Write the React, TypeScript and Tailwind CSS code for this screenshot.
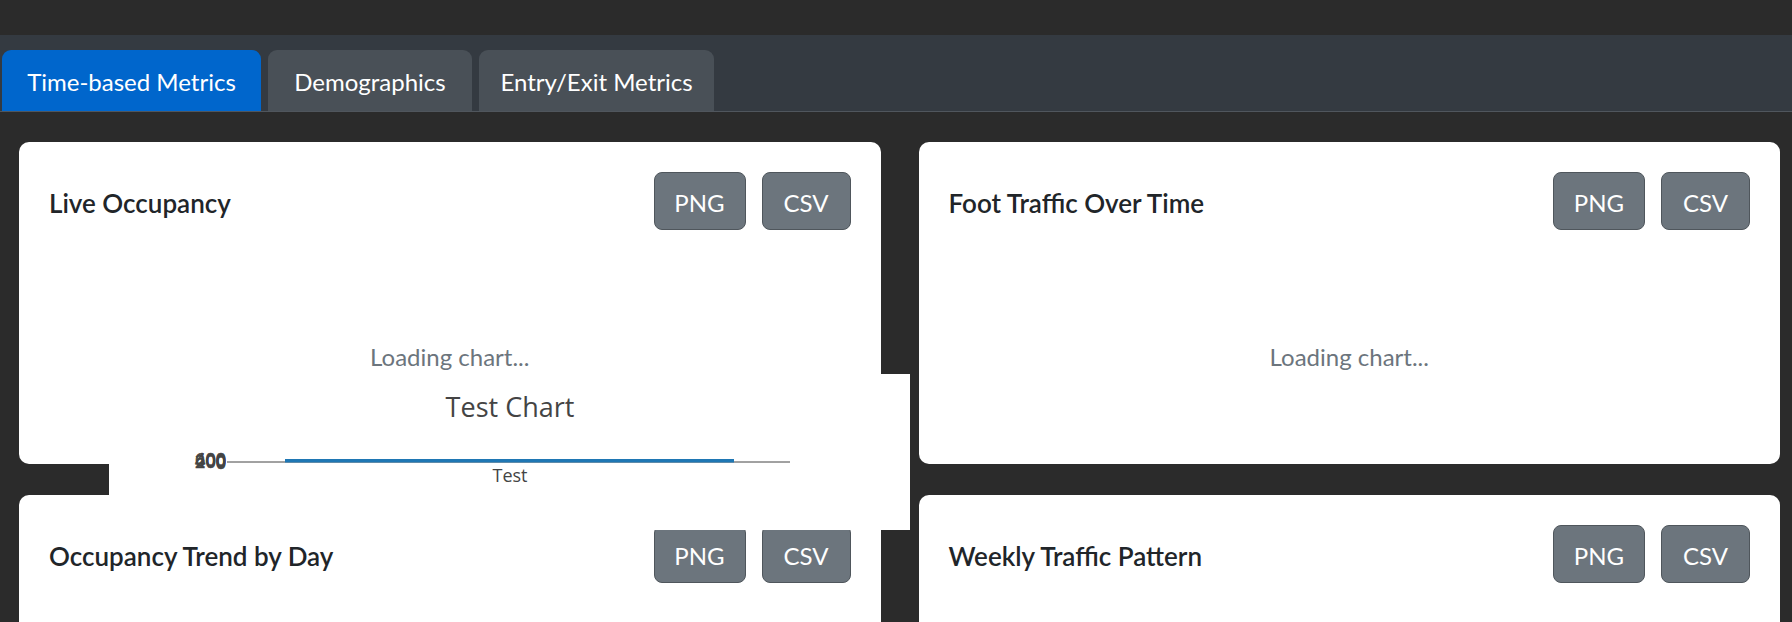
import React from 'react'

const tabs = [
  { label: 'Time-based Metrics', width: 'w-[259px]', active: true },
  { label: 'Demographics', width: 'w-[204px]', active: false },
  { label: 'Entry/Exit Metrics', width: 'w-[235px]', active: false },
]

const cards = [
  { title: 'Live Occupancy', loading: true },
  { title: 'Foot Traffic Over Time', loading: true },
  { title: 'Occupancy Trend by Day', loading: false },
  { title: 'Weekly Traffic Pattern', loading: false },
]

function ChartCard({ title, loading }: { title: string; loading: boolean }) {
  return (
    <div className="bg-white rounded-[10px] h-[322px] p-[30px] flex flex-col">
      {/* Header */}
      <div className="flex items-center justify-between h-[58px]">
        <h3 className="text-[26px] font-semibold text-[#212529] pt-[4px]">{title}</h3>
        <div className="flex gap-[16px]">
          <button className="w-[92px] h-[58px] pt-[3px] rounded-[8px] bg-[#6c757d] border border-[#4f565c] text-white text-[24px]">
            PNG
          </button>
          <button className="w-[89px] h-[58px] pt-[3px] rounded-[8px] bg-[#6c757d] border border-[#4f565c] text-white text-[24px]">
            CSV
          </button>
        </div>
      </div>

      {/* Chart body */}
      {loading && (
        <div className="flex-1 flex items-center justify-center pt-[50px]">
          <span className="text-[24px] text-[#6c757d]">Loading chart...</span>
        </div>
      )}
    </div>
  )
}

function TestChart() {
  return (
    <div className="absolute left-[109px] top-[374px] w-[801px] h-[156px] bg-white">
      <svg width="801" height="156" className="font-['Open_Sans','Noto_Sans',sans-serif]">
        <text x="401" y="43" textAnchor="middle" fontSize="27" fill="#444">
          Test Chart
        </text>
        <line x1="118" y1="88" x2="681" y2="88" stroke="#444" strokeWidth="1" />
        <rect x="176" y="85" width="449" height="3.5" fill="#1f77b4" />
        {['0', '200', '400', '600'].map((t, i) => (
          <text
            key={t}
            x="117"
            y={95 - i}
            textAnchor="end"
            fontSize="18"
            fill="#444"
            stroke="#444"
            strokeWidth="0.6"
          >
            {t}
          </text>
        ))}
        <text x="401" y="108" textAnchor="middle" fontSize="18" fill="#444">
          Test
        </text>
      </svg>
    </div>
  )
}

export default function App() {
  return (
    <div className="relative min-h-screen bg-[#2b2b2b] font-['Lato','Noto_Sans',sans-serif]">
      <div className="h-[35px]" />

      {/* Tabs */}
      <nav className="bg-[#343a41] pt-[15px] pl-[2px] border-b border-[#50565d] flex gap-[7px]">
        {tabs.map((tab) => (
          <div
            key={tab.label}
            className={`${tab.width} h-[61px] pt-[3px] rounded-t-[9px] flex items-center justify-center text-[24px] text-white ${
              tab.active ? 'bg-[#0066cc]' : 'bg-[#495057]'
            }`}
          >
            {tab.label}
          </div>
        ))}
      </nav>

      {/* Cards */}
      <main className="grid grid-cols-2 gap-x-[38px] gap-y-[31px] pl-[19px] pr-[12px] pt-[30px] pb-[30px]">
        {cards.map((c) => (
          <ChartCard key={c.title} title={c.title} loading={c.loading} />
        ))}
      </main>

      <TestChart />
    </div>
  )
}
